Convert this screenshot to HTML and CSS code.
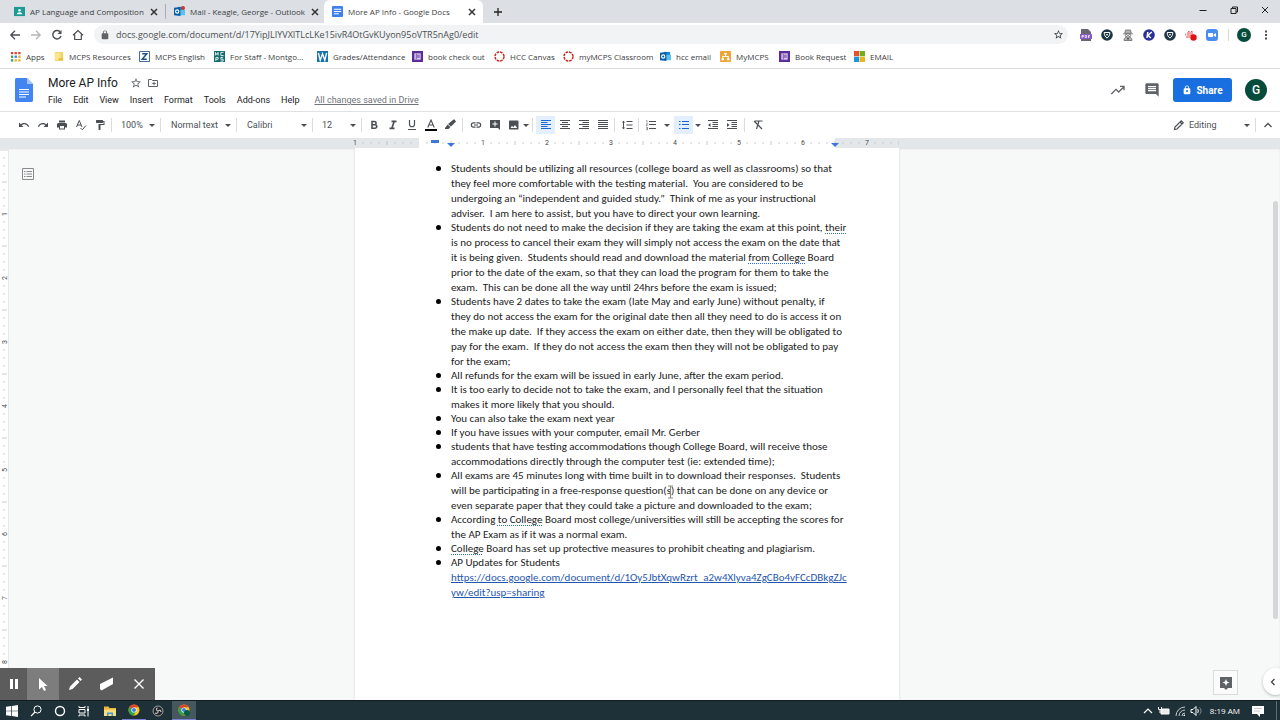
FILE: index.html
```html
<!DOCTYPE html>
<html lang="en">
<head>
<meta charset="utf-8">
<title>More AP Info - Google Docs</title>
<link rel="stylesheet" href="styles.css">
</head>
<body>
<svg class="defs" aria-hidden="true">
  <symbol id="i-close" viewBox="0 0 10 10"><path d="M2 2l6 6M8 2l-6 6" stroke="currentColor" stroke-width="1.500" fill="none"/></symbol>
  <symbol id="i-star" viewBox="0 0 24 24"><path fill="currentColor" d="M22 9.240l-7.190-.620L12 2 9.190 8.630 2 9.240l5.460 4.730L5.820 21 12 17.270 18.180 21l-1.630-7.030L22 9.240zM12 15.400l-3.760 2.270 1-4.280-3.320-2.880 4.380-.380L12 6.100l1.710 4.040 4.380.380-3.320 2.880 1 4.280L12 15.400z"/></symbol>
  <symbol id="i-lock" viewBox="0 0 24 24"><path fill="currentColor" d="M18 8h-1V6c0-2.760-2.240-5-5-5S7 3.240 7 6v2H6c-1.100 0-2 .9-2 2v10c0 1.100.9 2 2 2h12c1.100 0 2-.9 2-2V10c0-1.100-.9-2-2-2zM9 6c0-1.660 1.340-3 3-3s3 1.340 3 3v2H9V6z"/></symbol>
  <symbol id="i-form" viewBox="0 0 12 12"><path fill="#5b2d9a" d="M0 0h12v12H0z"/><path fill="#d9cbef" d="M2.500 2.500h7v7h-7z"/><path fill="#5b2d9a" d="M4.200 3h.8v6h-.8zM5.500 4h3v1h-3zM5.500 6h3v1h-3z"/></symbol>
  <symbol id="i-ring" viewBox="0 0 12 12"><circle cx="6" cy="6" r="4.900" fill="none" stroke="#c5281c" stroke-width="1.600" stroke-dasharray="2.850 1"/></symbol>
  <symbol id="i-outlook" viewBox="0 0 12 12"><path fill="#1687d9" d="M4 1h7v4H4z"/><path fill="#5cc0f2" d="M7 4h5v6H6z"/><path fill="#0a5ea8" d="M0 2l7-1v10l-7-1z"/><circle cx="3.500" cy="6" r="1.800" fill="none" stroke="#fff" stroke-width="1.200"/></symbol>
  <symbol id="i-shield" viewBox="0 0 12 12"><circle cx="6" cy="6" r="5.800" fill="#1d3745"/><path d="M3.200 3.500h5.600c0 2.500-1 4.500-2.800 5.500-1.800-1-2.800-3-2.800-5.500z" fill="none" stroke="#fff" stroke-width="1"/><path d="M5 5h2L6 7z" fill="#fff"/></symbol>
  <symbol id="i-chrome" viewBox="0 0 12 12"><circle cx="6" cy="6" r="5.500" fill="#f9c51d"/><path d="M6 6L1.200 3.300A5.500 5.500 0 0 1 10.800 3.300H6z" fill="#e2412f"/><path d="M1.200 3.300A5.500 5.500 0 0 0 5.600 11.500L8 7.500 6 6z" fill="#2fa24d"/><circle cx="6" cy="6" r="2.600" fill="#fff"/><circle cx="6" cy="6" r="2" fill="#3b7de9"/></symbol>
  <symbol id="i-docs" viewBox="0 0 12 12"><rect width="12" height="12" rx="1" fill="#3f80ee"/><path d="M2 3.500h8M2 6h8M2 8.500h5.500" stroke="#fff" stroke-width="1.100"/></symbol>
</svg>

<header class="tabs">
  <div class="tab"><svg class="fav" viewBox="0 0 12 12"><path fill="#1b9a96" d="M0 1h12v10H0z"/><circle cx="6" cy="4.600" r="1.400" fill="#fff"/><path d="M3 9c0-3 6-3 6 0z" fill="#fff"/></svg><span class="tab-name">AP Language and Composition</span><button class="x" aria-label="Close tab"><svg><use href="#i-close"/></svg></button></div>
  <div class="tab divided"><svg class="fav"><use href="#i-outlook"/><circle cx="9" cy="2" r="2" fill="#d2342c"/></svg><span class="tab-name">Mail - Keagle, George - Outlook</span><button class="x" aria-label="Close tab"><svg><use href="#i-close"/></svg></button></div>
  <div class="tab active"><svg class="fav"><use href="#i-docs"/></svg><span class="tab-name">More AP Info - Google Docs</span><button class="x" aria-label="Close tab"><svg><use href="#i-close"/></svg></button></div>
  <button class="newtab" aria-label="New tab"><svg viewBox="0 0 10 10"><path d="M5 1v8M1 5h8" stroke="#222" stroke-width="1.300"/></svg></button>
  <div class="winbtns">
    <button aria-label="Minimize"><svg viewBox="0 0 10 10"><path d="M1.500 5.500h7" stroke="#222"/></svg></button>
    <button aria-label="Restore"><svg viewBox="0 0 10 10"><path d="M2 3.500h5v5H2zM3.500 3.500V2h5v5H7" fill="none" stroke="#222"/></svg></button>
    <button aria-label="Close"><svg viewBox="0 0 10 10"><path d="M2 2l6 6M8 2L2 8" stroke="#222"/></svg></button>
  </div>
</header>

<div class="nav">
  <button aria-label="Back"><svg viewBox="0 0 12 12"><path d="M11 6H2M6 1.800L1.800 6 6 10.200" fill="none" stroke="#4a4d51" stroke-width="1.300"/></svg></button>
  <button aria-label="Forward"><svg viewBox="0 0 12 12"><path d="M1 6h9M6 1.800L10.200 6 6 10.200" fill="none" stroke="#b4b6b9" stroke-width="1.300"/></svg></button>
  <button aria-label="Reload"><svg viewBox="0 0 12 12"><path d="M10 7a4.200 4.200 0 1 1-1-4.200" fill="none" stroke="#4a4d51" stroke-width="1.400"/><path d="M10.500 1v4h-4z" fill="#4a4d51"/></svg></button>
  <button aria-label="Home"><svg viewBox="0 0 12 12"><path d="M1 6.300L6 1.500l5 4.800M2.700 5.500v5h6.600v-5" fill="none" stroke="#4a4d51" stroke-width="1.200"/></svg></button>
  <div class="omni">
    <svg class="lock"><use href="#i-lock"/></svg>
    <label class="sr" for="url">Address</label>
    <input id="url" type="text" value="docs.google.com/document/d/17YipJLIYVXITLcLKe15ivR4OtGvKUyon95oVTR5nAg0/edit">
    <button class="fave" aria-label="Bookmark this page"><svg><use href="#i-star"/></svg></button>
  </div>
  <div class="exts">
    <button aria-label="PDF"><svg viewBox="0 0 12 12"><path d="M1 0h7l3 3v9H1z" fill="#6b6473"/><path d="M0 5h12v5H0z" fill="#8a5cc4"/><path d="M2 9V6.500h1.500v1H2M5.200 6.500v2h1.300v-2zM8.500 9V6.500H10M8.500 7.800h1.200" fill="none" stroke="#fff" stroke-width=".7"/></svg></button>
    <button aria-label="Shield"><svg><use href="#i-shield"/></svg></button>
    <button aria-label="Agent"><svg viewBox="0 0 12 12"><path d="M3.500 1h5l.8 3.300H2.700zM1 4.800h10M2 11.500c0-3 1.500-3.500 4-3.500s4 .5 4 3.500z" fill="#b4b4b4" stroke="#777" stroke-width=".9"/><circle cx="4.300" cy="6.500" r="1.100" fill="#fff" stroke="#777"/><circle cx="7.700" cy="6.500" r="1.100" fill="#fff" stroke="#777"/><circle cx="6" cy="9.800" r="1" fill="#555"/></svg></button>
    <button aria-label="Kami"><svg viewBox="0 0 12 12"><circle cx="6" cy="6" r="5.800" fill="#27329b"/><path d="M4.800 3L4 9M8.800 3L5 6.300 7.800 9" fill="none" stroke="#fff" stroke-width="1.500"/></svg></button>
    <button aria-label="Shield"><svg><use href="#i-shield"/></svg></button>
    <button aria-label="Recorder"><svg viewBox="0 0 12 12"><path d="M2 3h6v4H2zM0 4l2 1.500L0 7z" fill="#f5a3a3"/><path d="M3 2.500h1.500M6 2.500h1.500M1 8h4" stroke="#e64a4a"/><circle cx="8.500" cy="8.500" r="3.200" fill="#e20f14"/></svg></button>
    <button aria-label="Zoom"><svg viewBox="0 0 12 12"><rect width="12" height="12" rx="3" fill="#4a8df0"/><path d="M2 4h5v4H3.500C2.700 8 2 7.500 2 7zM7.500 5.500L10 4v4L7.500 6.500z" fill="#fff"/></svg></button>
  </div>
  <button class="me small" aria-label="Profile">G</button>
  <button class="dots" aria-label="Menu"><svg viewBox="0 0 12 12"><path d="M5 1.500h2v2H5zM5 5h2v2H5zM5 8.500h2v2H5z" fill="#4a4d51"/></svg></button>
</div>

<nav class="marks">
  <a href="#"><svg viewBox="0 0 12 12"><path fill="#d9412f" d="M1 1h2.500v2.500H1zM5 1h2.500v2.500H5zM9 1h2.500v2.500H9z"/><path fill="#3a9a54" d="M1 5h2.500v2.500H1z"/><path fill="#3b78e0" d="M5 5h2.500v2.500H5z"/><path fill="#e9ad24" d="M9 5h2.500v2.500H9zM5 9h2.500v2.500H5zM9 9h2.500v2.500H9z"/><path fill="#3a9a54" d="M1 9h2.500v2.500H1z"/></svg>Apps</a>
  <a href="#"><svg viewBox="0 0 12 12"><rect x="2" y="1" width="9" height="10" rx="1" fill="#f1d263"/><path fill="#fbe68f" d="M2 2h6v8H2z"/><path fill="#e6bc3f" d="M6 8h5v2H6z"/></svg>MCPS Resources</a>
  <a href="#"><svg viewBox="0 0 12 12"><path fill="#fff" stroke="#2b578c" d="M.5.500h11v11H.500z"/><path d="M3.500 3h5L3.500 9h5" fill="none" stroke="#1c4f8b" stroke-width="1.600"/></svg>MCPS English</a>
  <a href="#"><svg viewBox="0 0 12 12"><path fill="#14696c" d="M0 0h12v12H0z"/><path d="M1.500 5V1.500L3 4l1.500-2.500V5M10.500 1.500H7.500V5h3M2 11V7h2.500v2H2M10 7H7.500v2H10v2H7" fill="none" stroke="#fff" stroke-width=".9"/></svg>For Staff - Montgo...</a>
  <a href="#"><svg viewBox="0 0 12 12"><path fill="#1673ad" d="M0 0h12v12H0z"/><path d="M1.500 2L3.500 10 6 3l2.500 7 2-8" fill="none" stroke="#fff" stroke-width="1.500"/></svg>Grades/Attendance</a>
  <a href="#"><svg><use href="#i-form"/></svg>book check out</a>
  <a href="#"><svg><use href="#i-ring"/></svg>HCC Canvas</a>
  <a href="#"><svg><use href="#i-ring"/></svg>myMCPS Classroom</a>
  <a href="#"><svg><use href="#i-outlook"/></svg>hcc email</a>
  <a href="#"><svg viewBox="0 0 12 12"><rect width="12" height="12" rx="1" fill="#eda536"/><path d="M6 3v3M3 9V6h6v3M4.500 3h3" fill="none" stroke="#fff" stroke-width="1.100"/><circle cx="3" cy="9" r="1.300" fill="#fff"/><circle cx="9" cy="9" r="1.300" fill="#fff"/><circle cx="6" cy="3" r="1.200" fill="#fff"/></svg>MyMCPS</a>
  <a href="#"><svg><use href="#i-form"/></svg>Book Request</a>
  <a href="#"><svg viewBox="0 0 12 12"><path fill="#e7502a" d="M0 0h5.700v5.700H0z"/><path fill="#6fae1d" d="M6.300 0H12v5.700H6.300z"/><path fill="#1998de" d="M0 6.300h5.700V12H0z"/><path fill="#f4b31c" d="M6.300 6.300H12V12H6.300z"/></svg>EMAIL</a>
</nav>

<div class="dochead">
  <svg class="logo" viewBox="0 0 18 24"><path d="M1.500 0H12l6 6v16.500c0 .8-.7 1.500-1.500 1.500h-15C.7 24 0 23.300 0 22.500v-21C0 .7.700 0 1.500 0z" fill="#4285f0"/><path d="M12 0l6 6h-6z" fill="#a6c5fa"/><path d="M4 11.500h10M4 14h10M4 16.500h10M4 19h7" stroke="#fff" stroke-width="1.200"/></svg>
  <div class="titles">
    <div class="title-row"><h1>More AP Info</h1>
      <button aria-label="Star"><svg><use href="#i-star"/></svg></button>
      <button aria-label="Move"><svg viewBox="0 0 24 24"><path d="M3 5h6l2 2h10v12H3z" fill="none" stroke="currentColor" stroke-width="2"/><path d="M14 9.500v7M10.500 13h7" stroke="currentColor" stroke-width="2"/></svg></button>
    </div>
    <div class="menu-row">
      <button>File</button><button>Edit</button><button>View</button><button>Insert</button><button>Format</button><button>Tools</button><button>Add-ons</button><button>Help</button>
      <a href="#">All changes saved in Drive</a>
    </div>
  </div>
  <div class="actions">
    <button aria-label="Activity"><svg viewBox="0 0 24 24"><path d="M2 18l7-7 4 4 8-8M15 6.500h6v6" fill="none" stroke="currentColor" stroke-width="2"/></svg></button>
    <button aria-label="Comments"><svg viewBox="0 0 24 24"><path fill="currentColor" d="M22 4c0-1.100-.9-2-2-2H4c-1.100 0-2 .9-2 2v12c0 1.100.9 2 2 2h14l4 4V4zM18 14H6v-2h12v2zm0-3H6V9h12v2zm0-3H6V6h12v2z"/></svg></button>
    <button class="share"><svg><use href="#i-lock"/><circle cx="5" cy="6" r="1" fill="#1a6fe0"/></svg>Share</button>
    <button class="me" aria-label="Account">G</button>
  </div>
</div>

<div class="bar">
  <button aria-label="Undo"><svg viewBox="0 0 24 24"><path fill="currentColor" d="M12.500 8c-2.650 0-5.050.990-6.900 2.600L2 7v9h9l-3.620-3.620c1.390-1.160 3.160-1.880 5.120-1.880 3.540 0 6.550 2.310 7.600 5.500l2.370-.780C21.080 11.030 17.150 8 12.500 8z"/></svg></button>
  <button aria-label="Redo"><svg viewBox="0 0 24 24"><path fill="currentColor" d="M18.400 10.600C16.550 8.990 14.150 8 11.500 8c-4.650 0-8.580 3.030-9.960 7.220L3.900 16c1.050-3.190 4.050-5.500 7.600-5.500 1.950 0 3.730.720 5.120 1.880L13 16h9V7l-3.600 3.600z"/></svg></button>
  <button aria-label="Print"><svg viewBox="0 0 24 24"><path fill="currentColor" d="M19 8H5c-1.660 0-3 1.340-3 3v6h4v4h12v-4h4v-6c0-1.660-1.340-3-3-3zm-3 11H8v-5h8v5zM18 3H6v4h12V3z"/></svg></button>
  <button aria-label="Spelling"><svg viewBox="0 0 24 24"><path d="M3 16L8.500 3 14 16M5 12h7M11 18l3.500 3.500L22 13" fill="none" stroke="currentColor" stroke-width="2"/></svg></button>
  <button aria-label="Paint format"><svg viewBox="0 0 24 24"><path fill="currentColor" d="M18 4V3c0-.550-.450-1-1-1H5c-.550 0-1 .450-1 1v4c0 .550.450 1 1 1h12c.550 0 1-.450 1-1V6h1v4H9v11c0 .550.450 1 1 1h2c.550 0 1-.450 1-1v-9h8V4h-3z"/></svg></button>
  <i class="sep"></i>
  <label class="pick narrow"><span class="sr">Zoom</span><select><option>100%</option></select></label>
  <i class="sep"></i>
  <label class="pick"><span class="sr">Style</span><select><option>Normal text</option></select></label>
  <i class="sep"></i>
  <label class="pick"><span class="sr">Font</span><select><option>Calibri</option></select></label>
  <i class="sep"></i>
  <label class="pick narrow"><span class="sr">Font size</span><select><option>12</option></select></label>
  <i class="sep"></i>
  <button aria-label="Bold"><svg viewBox="0 0 24 24"><path d="M8 5h5a3.200 3.200 0 0 1 0 6.500H8zM8 11.500h6a3.500 3.500 0 0 1 0 7H8z" fill="none" stroke="currentColor" stroke-width="3.200"/></svg></button>
  <button aria-label="Italic"><svg viewBox="0 0 24 24"><path fill="currentColor" d="M9 3v3.500h3L8.500 17H5v3.500h10V17h-3l3.500-10.500H19V3z"/></svg></button>
  <button aria-label="Underline"><svg viewBox="0 0 24 24"><path d="M7 2v8.500a5 5 0 0 0 10 0V2M4 21h16" fill="none" stroke="currentColor" stroke-width="2.400"/></svg></button>
  <button aria-label="Text color"><svg viewBox="0 0 24 24"><path d="M5.500 17L12 2l6.500 15M8 12h8" fill="none" stroke="currentColor" stroke-width="2.200"/><path d="M0 20h24v4H0z" fill="#000"/></svg></button>
  <button aria-label="Highlight"><svg viewBox="0 0 24 24"><path fill="currentColor" d="M21 1l3 4-10 10-6-5L19 1zM7 11l6 5-4 4H2v-2z"/></svg></button>
  <i class="sep wide"></i>
  <button aria-label="Link"><svg viewBox="0 0 24 24"><path fill="currentColor" d="M3.900 12c0-1.710 1.390-3.100 3.100-3.100h4V6.500H7a5.500 5.500 0 0 0 0 11h4v-2.400H7c-1.710 0-3.100-1.390-3.100-3.100zM8 13.200h8v-2.400H8v2.400zm9-6.700h-4v2.400h4c1.710 0 3.100 1.390 3.100 3.100s-1.390 3.100-3.100 3.100h-4v2.400h4a5.500 5.500 0 0 0 0-11z"/></svg></button>
  <button aria-label="Add comment"><svg viewBox="0 0 24 24"><path fill="currentColor" d="M2 2h20v20l-4-4H2zm9 3v4H7v2h4v4h2v-4h4V9h-4V5z"/></svg></button>
  <button aria-label="Image"><svg viewBox="0 0 24 24"><path fill="currentColor" d="M21 19V5c0-1.100-.9-2-2-2H4c-1.100 0-2 .9-2 2v14c0 1.100.9 2 2 2h15c1.100 0 2-.9 2-2zM8 13.500l2.500 3L14 12l4.500 6H5z"/></svg></button>
  <button class="caret c6" aria-label="Image options"></button>
  <i class="sep wide"></i>
  <button class="on" aria-label="Align left"><svg viewBox="0 0 24 24"><path d="M2 3h20M2 7h13M2 11h20M2 15h13M2 19h20" stroke="currentColor" stroke-width="2"/></svg></button>
  <button aria-label="Align center"><svg viewBox="0 0 24 24"><path d="M2 3h20M6 7h12M2 11h20M6 15h12M2 19h20" stroke="currentColor" stroke-width="2"/></svg></button>
  <button aria-label="Align right"><svg viewBox="0 0 24 24"><path d="M2 3h20M9 7h13M2 11h20M9 15h13M2 19h20" stroke="currentColor" stroke-width="2"/></svg></button>
  <button aria-label="Justify"><svg viewBox="0 0 24 24"><path d="M2 3h20M2 7h20M2 11h20M2 15h20M2 19h20" stroke="currentColor" stroke-width="2"/></svg></button>
  <i class="sep"></i>
  <button aria-label="Line spacing"><svg viewBox="0 0 24 24"><path fill="currentColor" d="M6 7h2.500L5 3.500 1.500 7H4v10H1.500L5 20.500 8.500 17H6V7zm5-3v2h12V4zm0 14v2h12v-2zm0-7v2h12v-2H11z"/></svg></button>
  <i class="sep"></i>
  <button aria-label="Numbered list"><svg viewBox="0 0 24 24"><path d="M8 5h14M8 11h14M8 19h14" stroke="currentColor" stroke-width="2"/><path d="M2.500 3H4v4M2 9.500h3L2.500 13H5M2 16.500h3v5H2M3 19h2" fill="none" stroke="currentColor" stroke-width="1.200"/></svg></button>
  <button class="caret c14" aria-label="Numbered list options"></button>
  <button class="on" aria-label="Bulleted list"><svg viewBox="0 0 24 24"><path d="M8 5h14M8 11h14M8 19h14M2 5h3M2 11h3M2 19h3" stroke="currentColor" stroke-width="2.400"/></svg></button>
  <button class="caret c10" aria-label="Bulleted list options"></button>
  <button aria-label="Decrease indent"><svg viewBox="0 0 24 24"><path fill="currentColor" d="M11 16h11v-2H11v2zm-9-4l5 4V8l-5 4zm0 8h20v-2H2v2zM2 2v2h20V2H2zm9 6h11V6H11v2zm0 4h11v-2H11v2z"/></svg></button>
  <button aria-label="Increase indent"><svg viewBox="0 0 24 24"><path fill="currentColor" d="M11 16h11v-2H11v2zM2 8v8l5-4-5-4zm0 12h20v-2H2v2zM2 2v2h20V2H2zm9 6h11V6H11v2zm0 4h11v-2H11v2z"/></svg></button>
  <i class="sep wide"></i>
  <button aria-label="Clear formatting"><svg viewBox="0 0 24 24"><path d="M6 4h15M14 4l-5 16M4 4l16 16" fill="none" stroke="currentColor" stroke-width="2.400"/></svg></button>
  <div class="mode">
    <svg viewBox="0 0 24 24"><path d="M3 21l1-5L16.500 3.500l4 4L8 20zM14 6l4 4" fill="none" stroke="currentColor" stroke-width="2.400"/></svg>
    <label class="pick editing"><span class="sr">Mode</span><select><option>Editing</option></select></label>
    <i class="sep"></i>
    <button aria-label="Hide menus"><svg viewBox="0 0 24 24"><path d="M5 16l7-7 7 7" fill="none" stroke="currentColor" stroke-width="2.600"/></svg></button>
  </div>
</div>

<div class="ruler">
  <svg viewBox="0 0 552 11" width="552" height="11">
    <defs><pattern id="tk" width="64" height="11" patternUnits="userSpaceOnUse"><path d="M8 4v2M16 4v2M24 4v2M40 4v2M48 4v2M56 4v2" stroke="#c9cccf"/><path d="M32 3v4" stroke="#c2c5c8"/></pattern></defs>
    <path fill="#fff" d="M68 0h416v10H68z"/>
    <g transform="translate(4 0)"><path fill="url(#tk)" d="M0 0h544v11H0z"/>
    <g class="num"><text x="0" y="7">1</text><text x="128" y="7">1</text><text x="192" y="7">2</text><text x="256" y="7">3</text><text x="320" y="7">4</text><text x="384" y="7">5</text><text x="448" y="7">6</text><text x="512" y="7">7</text></g>
    <path fill="#3c78d8" d="M76 2h8v3h-8zM92 5h8l-4 4zM476 5h8l-4 4z"/></g>
  </svg>
</div>

<main class="work">
  <svg class="vr" width="9" height="552" viewBox="0 0 9 552">
    <defs><pattern id="vt" y="2" width="9" height="64" patternUnits="userSpaceOnUse"><path d="M3 8h2M3 16h2M3 24h2M3 40h2M3 48h2M3 56h2" stroke="#d3d5d8"/><path d="M2 32h5" stroke="#c8cbce"/></pattern></defs>
    <path fill="#fff" d="M0 0h8v552H0z"/><path fill="#e6e8ea" d="M0 0h9v3H0zM8 0h1v552H8z"/><path fill="url(#vt)" d="M0 4h9v548H0z"/>
    <g class="num"><text transform="translate(7 66) rotate(-90)">1</text><text transform="translate(7 130) rotate(-90)">2</text><text transform="translate(7 194) rotate(-90)">3</text><text transform="translate(7 258) rotate(-90)">4</text><text transform="translate(7 322) rotate(-90)">5</text><text transform="translate(7 386) rotate(-90)">6</text><text transform="translate(7 450) rotate(-90)">7</text><text transform="translate(7 514) rotate(-90)">8</text></g>
  </svg>
  <button class="outline" aria-label="Show outline"><svg viewBox="0 0 12 12"><path d="M.5.500h11v11H.500z" fill="none" stroke="#888b8e"/><path d="M2 3.500h1.500M2 6h1.500M2 8.500h1.500M4.500 3.500H10M4.500 6H10M4.500 8.500H10" stroke="#888b8e"/></svg></button>
  <article class="page">
    <ul>
      <li>Students should be utilizing all resources (college board as well as classrooms) so that<br>they feel more comfortable with the testing material.&nbsp; You are considered to be<br>undergoing an “independent and guided study.”&nbsp; Think of me as your instructional<br>adviser.&nbsp; I am here to assist, but you have to direct your own learning.</li>
      <li>Students do not need to make the decision if they are taking the exam at this point, <u>their</u><br>is no process to cancel their exam they will simply not access the exam on the date that<br>it is being given.&nbsp; Students should read and download the material <u>from College</u> Board<br>prior to the date of the exam, so that they can load the program for them to take the<br>exam.&nbsp; This can be done all the way until 24hrs before the exam is issued;</li>
      <li>Students have 2 dates to take the exam (late May and early June) without penalty, if<br>they do not access the exam for the original date then all they need to do is access it on<br>the make up date.&nbsp; If they access the exam on either date, then they will be obligated to<br>pay for the exam.&nbsp; If they do not access the exam then they will not be obligated to pay<br>for the exam;</li>
      <li>All refunds for the exam will be issued in early June, after the exam period.</li>
      <li>It is too early to decide not to take the exam, and I personally feel that the situation<br>makes it more likely that you should.</li>
      <li>You can also take the exam next year</li>
      <li>If you have issues with your computer, email Mr. Gerber</li>
      <li>students that have testing accommodations though College Board, will receive those<br>accommodations directly through the computer test (ie: extended time);</li>
      <li>All exams are 45 minutes long with time built in to download their responses.&nbsp; Students<br>will be participating in a free-response question(<span class="at">s<svg class="ibeam" viewBox="0 0 7 14"><path d="M1 1h5M3.500 1v12M1 13h5" fill="none" stroke="#8a8a8a"/></svg></span>) that can be done on any device or<br>even separate paper that they could take a picture and downloaded to the exam;</li>
      <li>According <u>to College</u> Board most college/universities will still be accepting the scores for<br>the AP Exam as if it was a normal exam.</li>
      <li><u>College</u> Board has set up protective measures to prohibit cheating and plagiarism.</li>
      <li>AP Updates for Students<br><a href="#">https://docs.google.com/document/d/1Oy5JbtXqwRzrt_a2w4Xlyva4ZgCBo4vFCcDBkgZJc<br>yw/edit?usp=sharing</a></li>
    </ul>
  </article>
  <div class="scroll"></div>
  <div class="recorder">
    <button class="r1" aria-label="Pause"><svg viewBox="0 0 16 16"><path d="M4 3h3v10H4zM9 3h3v10H9z" fill="#fff"/></svg></button>
    <button class="sel" aria-label="Pointer"><svg viewBox="0 0 16 16"><path d="M4 2l8.500 8H9l2 4-2 1-2-4-3 2.500z" fill="#fff"/></svg></button>
    <button aria-label="Pen"><svg viewBox="0 0 16 16"><path d="M2 14l1-3.500L10 3.500 12.500 6 5.500 13zM11 2.500L12.500 1 15 3.500 13.500 5z" fill="#fff"/></svg></button>
    <button aria-label="Eraser"><svg viewBox="0 0 16 16"><path d="M1 8l13-6.500V8L2.500 14.500 1 13z" fill="#fff"/></svg></button>
    <button aria-label="Close"><svg viewBox="0 0 16 16"><path d="M3.500 3.500l9 9M12.500 3.500l-9 9" stroke="#fff" stroke-width="1.400"/></svg></button>
  </div>
  <button class="explore" aria-label="Explore"><svg viewBox="0 0 14 14"><path fill="#5f6266" d="M1 1h12v11H9l-2 2-2-2H1z"/><path fill="#fff" d="M7 3l1 2.500 2.500 1L8 7.500 7 10 6 7.500 3.500 6.500 6 5.500z"/></svg></button>
  <button class="side" aria-label="Show side panel"><svg viewBox="0 0 10 10"><path d="M6.500 2l-3 3 3 3" fill="none" stroke="#444" stroke-width="1.300"/></svg></button>
</main>

<footer class="task">
  <button aria-label="Start"><svg viewBox="0 0 12 12"><path fill="#fff" d="M0 1.800l5.300-.8v4.700H0zM6 .9L12 0v5.700H6zM0 6.300h5.300V11L0 10.200zM6 6.300h6V12l-6-.9z"/></svg></button>
  <button aria-label="Search"><svg viewBox="0 0 12 12"><circle cx="7.500" cy="4.500" r="3.600" fill="none" stroke="#fff"/><path d="M5 7L1 11.200" stroke="#fff" stroke-width="1.200"/></svg></button>
  <button aria-label="Cortana"><svg viewBox="0 0 12 12"><circle cx="6" cy="6" r="4.500" fill="none" stroke="#fff" stroke-width="1.400"/></svg></button>
  <button aria-label="Task view"><svg viewBox="0 0 12 12"><path d="M1 1v1.500h6V1M1 4.500h6v3.500H1zM1 11.500V10h6v1.500M10 1v10.500" fill="none" stroke="#fff"/><path d="M9 4h2v2H9z" fill="#fff"/></svg></button>
  <button class="apart" aria-label="File Explorer"><svg viewBox="0 0 12 12"><path d="M0 1.500h4.500l1 1.500H12v8H0z" fill="#e9b83c"/><path d="M0 4.500h12V11H0z" fill="#fbdc7c"/><path d="M3 7.500h6V11H7.500V9h-3v2H3z" fill="#3d9bd8"/></svg></button>
  <button class="run" aria-label="Chrome"><svg><use href="#i-chrome"/></svg></button>
  <button aria-label="OBS"><svg viewBox="0 0 12 12"><circle cx="6" cy="6" r="5" fill="#23272b" stroke="#a9adb0" stroke-width=".9"/><path d="M6 6c-2-.5-2-2.500-.5-3.200M6 6c1.500-1.500 3-.5 3 1M6 6c.3 2-1.200 3-3 2" fill="none" stroke="#c3c7c9" stroke-width="1.100"/></svg></button>
  <button class="run cur apart" aria-label="Chrome profile"><svg><use href="#i-chrome"/><circle cx="9" cy="9" r="3" fill="#0b5a48"/></svg></button>
  <div class="tray">
    <svg viewBox="0 0 12 12"><path d="M2 8l4-4 4 4" fill="none" stroke="#fff" stroke-width="1.200"/></svg>
    <svg viewBox="0 0 12 12"><path d="M3 4h8v5H3z" fill="#e8eaeb" stroke="#fff"/><path d="M.5 2v2.500h3V2M2 4.500V8" fill="none" stroke="#fff"/></svg>
    <svg viewBox="0 0 12 12"><path d="M2 11A9 9 0 0 1 11 2M5 11a6 6 0 0 1 6-6M8 11a3 3 0 0 1 3-3" fill="none" stroke="#c3c8cb"/><path d="M9 11l2-2v2z" fill="#fff"/></svg>
    <svg viewBox="0 0 12 12"><path d="M1 4.500h2l3-3v9l-3-3H1z" fill="none" stroke="#fff"/><path d="M7.500 4c1 1 1 3 0 4" fill="none" stroke="#fff"/><path d="M9.500 2.500c2 2 2 5 0 7" fill="none" stroke="#829096"/></svg>
    <time>8:19 AM</time>
    <svg viewBox="0 0 12 12"><path fill="#fff" d="M0 1h12v8H8v3L5 9H0z"/><path d="M2 3.500h8M2 6h6" stroke="#b8bdc0" stroke-width=".8"/></svg>
    <i class="desk"></i>
  </div>
</footer>
</body>
</html>
```
FILE: styles.css
```css
* { box-sizing: border-box; }
body { margin: 0; height: 100vh; display: flex; flex-direction: column; overflow: hidden; background: #fff; font-family: Roboto, "Liberation Sans", sans-serif; font-size: 9px; color: #3c4043; }
button { border: 0; padding: 0; margin: 0; background: none; font: inherit; color: inherit; display: flex; align-items: center; justify-content: center; flex: none; }
svg { display: block; flex: none; }
.defs { position: absolute; width: 0; height: 0; }
.sr { position: absolute; width: 1px; height: 1px; overflow: hidden; clip-path: inset(50%); }

.tabs { display: flex; align-items: stretch; height: 23px; flex: none; background: #dcdfe4; padding-left: 6px; font-family: "Open Sans", "Noto Sans", sans-serif; font-size: 8px; }
.tab { width: 159px; display: flex; align-items: center; padding: 0 6px 0 8px; gap: 5px; white-space: nowrap; }
.tab.divided { border-left: 1px solid #a9acb1; border-image: linear-gradient(transparent 20%, #a9acb1 20% 80%, transparent 80%) 1; }
.tab.active { background: #fff; border-radius: 6px 6px 0 0; }
.tab-name { flex: 1; }
.fav { width: 11px; height: 11px; }
.x, .x svg { width: 10px; height: 10px; color: #333; }
.newtab { width: 30px; }
.newtab svg { width: 10px; height: 10px; }
.winbtns { margin-left: auto; display: flex; }
.winbtns button { width: 31px; height: 20px; }
.winbtns svg { width: 10px; height: 10px; }

.nav { display: flex; align-items: center; height: 23px; flex: none; padding: 0 8px 0 4px; }
.nav > button { width: 21px; }
.nav > button svg { width: 12px; height: 12px; }
.omni { flex: 1; display: flex; align-items: center; height: 19px; margin-left: 6px; padding: 0 4px 0 6px; border-radius: 10px; background: #f1f3f4; }
.lock { width: 10px; height: 10px; color: #5f6368; }
.omni input { flex: 1; min-width: 0; border: 0; padding: 0; margin-left: 6px; background: none; font-family: "Open Sans", "Noto Sans", sans-serif; font-size: 9px; color: #4c5054; height: 16px; }
.fave svg { width: 11px; height: 11px; }
.exts { display: flex; align-items: center; gap: 9px; padding: 0 10px 0 12px; border-right: 1px solid #d5d8db; }
.exts svg { width: 12px; height: 12px; }
.me { width: 22px; height: 22px; border-radius: 50%; background: #064c3c; color: #fff; font-size: 12px; font-weight: 500; }
.nav .me.small { width: 14px; height: 14px; font-size: 8px; margin-left: 8px; }
.nav .dots { width: 12px; margin-left: 9px; }

.marks { display: grid; grid-template-columns: 43px 86px 75px 103px 95px 82px 69px 97px 60px 59px 75px auto; align-items: center; height: 23px; flex: none; padding: 0 0 2px 10px; border-bottom: 1px solid #dadce0; font-family: "Open Sans", "Noto Sans", sans-serif; font-size: 8px; }
.marks a { display: flex; align-items: center; gap: 5px; color: #3c4043; text-decoration: none; white-space: nowrap; }
.marks svg { width: 11px; height: 11px; }

.dochead { display: flex; align-items: center; height: 43px; flex: none; padding: 0 13px 0 15px; border-bottom: 1px solid #dfe1e4; }
.logo { width: 18px; height: 24px; }
.titles { margin-left: 15px; padding-top: 2px; }
.title-row { display: flex; align-items: center; height: 18px; }
h1 { margin: 0 12px 0 0; font-size: 12px; font-weight: 400; color: #202124; }
.title-row button { margin-right: 5px; }
.title-row svg { width: 12px; height: 12px; color: #5f6368; }
.menu-row { display: flex; align-items: center; gap: 11px; height: 16px; color: #202124; }
.menu-row a { color: #70757a; margin-left: 4px; }
.actions { margin-left: auto; display: flex; align-items: center; color: #5f6368; }
.actions > button > svg { width: 16px; height: 16px; }
.actions > button { margin-left: 18px; }
.actions .share { width: 59px; height: 24px; margin-left: 13px; gap: 4px; border-radius: 3px; background: #1a6fe0; color: #fff; font-size: 10px; font-weight: 700; }
.actions .share svg { width: 10px; height: 10px; }
.actions .me { margin-left: 13px; }

.bar { display: flex; align-items: center; height: 26px; flex: none; padding-left: 14px; color: #4b4f54; }
.bar button { width: 19px; height: 18px; }
.bar svg { width: 12px; height: 12px; }
.bar .on { background: #e3effd; color: #1a66d6; }
.sep { width: 1px; height: 14px; margin: 0 2px; background: #dadce0; flex: none; }
.sep.wide { margin: 0 3px; }
.pick { position: relative; width: 71px; height: 18px; }
.pick.narrow { width: 44px; }
.pick.editing { width: 68px; }
.pick select { appearance: none; width: 100%; height: 18px; border: 0; padding: 0 0 0 8px; background: none; font: inherit; color: inherit; }
.pick.narrow select { padding-left: 7px; }
.pick.editing select { padding-left: 4px; }
.pick::after { content: ""; position: absolute; right: 3px; top: 8px; border: 3px solid transparent; border-top-color: #4b4f54; border-bottom: 0; }
.bar .caret::before { content: ""; border: 3px solid transparent; border-top-color: #4b4f54; border-bottom: 0; }
.bar .c6 { width: 6px; }
.bar .c10 { width: 10px; }
.bar .c14 { width: 14px; }
.mode { margin-left: auto; display: flex; align-items: center; padding-right: 3px; }

.ruler { display: flex; justify-content: center; height: 10px; flex: none; padding: 0 35px 0 9px; background: #e4e7ea; }
.num { font-family: Roboto, sans-serif; font-size: 7px; fill: #44484c; text-anchor: middle; }

.work { position: relative; flex: 1; min-height: 0; display: flex; justify-content: center; overflow: hidden; padding: 0 35px 0 9px; background: #f7f9f9; box-shadow: inset 0 1px 2px #dcdfe2; }
.vr { position: absolute; left: 0; top: 0; }
.outline { position: absolute; left: 22px; top: 20px; }
.outline svg { width: 12px; height: 12px; }
.page { width: 544px; padding: 13px 0 0 96px; background: #fff; box-shadow: 0 0 2px #cfd2d5; font-family: Carlito, Lato, sans-serif; font-size: 11px; line-height: 15px; color: #222; white-space: nowrap; }
.page ul { margin: 0; padding: 0; list-style: none; }
.page li { position: relative; margin-bottom: -1px; }
.page li::before { content: ""; position: absolute; left: -15px; top: 5px; width: 5px; height: 5px; border-radius: 50%; background: #000; }
.page u { text-decoration: underline dotted #2f6bd0 1px; text-underline-offset: 2px; text-decoration-skip-ink: none; }
.page a { color: #1f57b0; }
.at { position: relative; }
.ibeam { position: absolute; left: 0; top: 1px; width: 7px; height: 14px; }
.scroll { position: absolute; right: 2px; top: 53px; width: 5px; height: 418px; border-radius: 3px; background: #d4d6d8; }
.recorder { position: absolute; left: 0; bottom: 0; display: flex; height: 32px; background: #5c5c5c; }
.recorder button { width: 32px; }
.recorder .r1 { width: 27px; }
.recorder .sel { background: #7d7d7d; }
.recorder svg { width: 16px; height: 16px; }
.explore { position: absolute; right: 42px; bottom: 5px; width: 25px; height: 25px; border: 1px solid #d8dadc; background: #fbfbfb; }
.explore svg { width: 14px; height: 14px; }
.side { position: absolute; right: -8px; bottom: 5px; width: 25px; height: 27px; border-radius: 14px; background: #fff; box-shadow: 0 1px 3px #b5b8bb; padding-right: 6px; }
.side svg { width: 10px; height: 10px; }

.task { display: flex; align-items: stretch; height: 20px; flex: none; background: #1e3038; border-top: 1px solid #101c22; color: #fff; }
.task > button { width: 24px; }
.task > .apart { margin-left: 2px; }
.task > button svg { width: 12px; height: 12px; }
.task .run { border-bottom: 1px solid #7d80d8; }
.task .cur { background: #46575e; }
.tray { margin-left: auto; display: flex; align-items: center; gap: 4px; padding-right: 3px; font-family: "Open Sans", "Noto Sans", sans-serif; font-size: 8px; }
.tray svg { width: 12px; height: 12px; }
.tray time { margin: 0 8px 0 4px; }
.desk { width: 1px; height: 100%; margin-left: 8px; background: #5f6e75; }
```
